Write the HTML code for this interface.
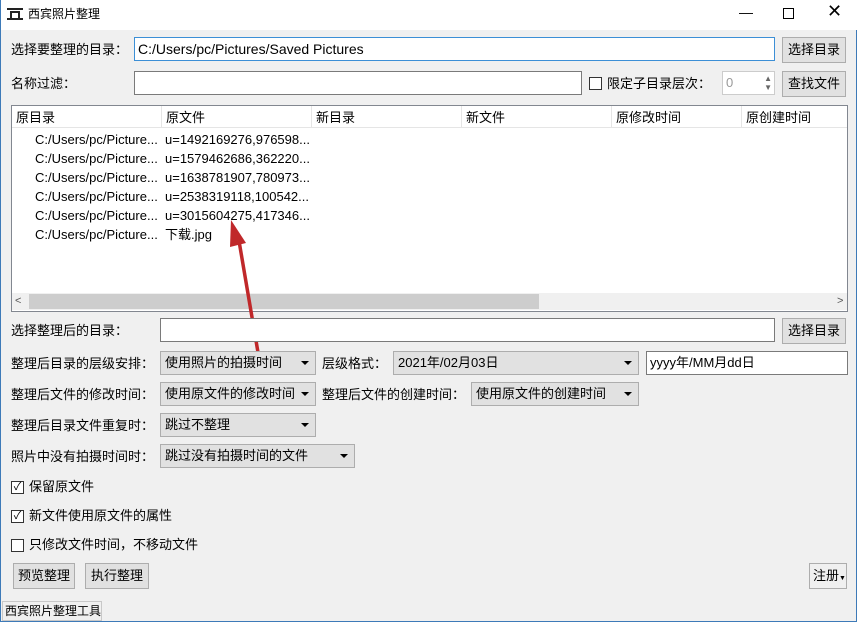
<!DOCTYPE html>
<html><head><meta charset="utf-8"><style>
*{box-sizing:border-box;margin:0;padding:0}
body{width:857px;height:622px;background:#f0f0f0;font-family:"Liberation Sans","Noto Sans CJK SC",sans-serif;font-size:13px;line-height:17px;color:#000;position:relative;overflow:hidden;border-left:1px solid #3d7ab8;border-right:1px solid #3d7ab8;border-bottom:1px solid #3d7ab8}
.a{position:absolute;white-space:nowrap}
.in{position:absolute;background:#fff;border:1px solid #7a7a7a;height:24px;line-height:22px;padding-left:3px}
.btn{position:absolute;background:#e1e1e1;border:1px solid #adadad;height:26px;line-height:24px;text-align:center}
.cb{position:absolute;background:#e1e1e1;border:1px solid #adadad;height:24px;line-height:22px;padding-left:4px}
.cb:after{content:"";position:absolute;right:6px;top:9px;border-left:4px solid transparent;border-right:4px solid transparent;border-top:4px solid #000}
.chk{position:absolute;width:13px;height:13px;border:1px solid #333;background:#fff;font-size:11px;line-height:11px;text-align:center}
</style></head><body>
<div class="a" style="left:0;top:0;width:857px;height:30px;background:#fff"></div>
<div class="a" style="left:6px;top:8px;width:16px;height:12px;border-top:2px solid #222;border-bottom:2px solid #222"><div style="position:absolute;left:3px;top:1px;width:10px;height:7px;border:2px solid #222;border-bottom:none"></div></div>
<div class="a" style="left:27px;top:6px;font-size:12px">西宾照片整理</div>
<div class="a" style="left:738px;top:4px;font-size:14px">&#x2014;</div>
<div class="a" style="left:782px;top:8px;width:11px;height:11px;border:1px solid #000"></div>
<div class="a" style="left:826px;top:3px;font-size:18px">&#x2715;</div>

<div class="a" style="left:10px;top:41px">选择要整理的目录：</div>
<div class="in" style="left:133px;top:37px;width:641px;border-color:#3c8fd6;font-size:14px">C:/Users/pc/Pictures/Saved Pictures</div>
<div class="btn" style="left:781px;top:37px;width:64px">选择目录</div>

<div class="a" style="left:10px;top:75px">名称过滤：</div>
<div class="in" style="left:133px;top:71px;width:448px"></div>
<div class="chk" style="left:588px;top:77px"></div>
<div class="a" style="left:606px;top:75px">限定子目录层次：</div>
<div class="in" style="left:721px;top:71px;width:53px;border-color:#ccc;color:#999">0<span style="position:absolute;right:2px;top:2px;font-size:8px;line-height:9px;color:#666">▲<br>▼</span></div>
<div class="btn" style="left:781px;top:71px;width:64px">查找文件</div>

<div class="a" style="left:10px;top:105px;width:837px;height:207px;background:#fff;border:1px solid #828790"></div>
<div class="a" style="left:11px;top:106px;width:835px;height:22px;border-bottom:1px solid #e5e5e5"></div>
<div class="a" style="left:15px;top:109px">原目录</div>
<div class="a" style="left:160px;top:106px;width:1px;height:22px;background:#e5e5e5"></div>
<div class="a" style="left:165px;top:109px">原文件</div>
<div class="a" style="left:310px;top:106px;width:1px;height:22px;background:#e5e5e5"></div>
<div class="a" style="left:315px;top:109px">新目录</div>
<div class="a" style="left:460px;top:106px;width:1px;height:22px;background:#e5e5e5"></div>
<div class="a" style="left:465px;top:109px">新文件</div>
<div class="a" style="left:610px;top:106px;width:1px;height:22px;background:#e5e5e5"></div>
<div class="a" style="left:615px;top:109px">原修改时间</div>
<div class="a" style="left:740px;top:106px;width:1px;height:22px;background:#e5e5e5"></div>
<div class="a" style="left:745px;top:109px">原创建时间</div>
<div class="a" style="left:34px;top:130px;line-height:19px">C:/Users/pc/Picture...<br>C:/Users/pc/Picture...<br>C:/Users/pc/Picture...<br>C:/Users/pc/Picture...<br>C:/Users/pc/Picture...<br>C:/Users/pc/Picture...</div>
<div class="a" style="left:164px;top:130px;line-height:19px">u=1492169276,976598...<br>u=1579462686,362220...<br>u=1638781907,780973...<br>u=2538319118,100542...<br>u=3015604275,417346...<br>下载.jpg</div>
<div class="a" style="left:11px;top:293px;width:835px;height:17px;background:#f0f0f0"></div>
<div class="a" style="left:28px;top:294px;width:510px;height:15px;background:#cdcdcd"></div>
<div class="a" style="left:14px;top:293px;font-size:11px;color:#555">&lt;</div>
<div class="a" style="left:836px;top:293px;font-size:11px;color:#555">&gt;</div>

<svg class="a" style="left:225px;top:215px" width="45" height="160"><line x1="35" y1="155" x2="12" y2="20" stroke="#c0282a" stroke-width="3.5"/><polygon points="5,5 4,32 20,28" fill="#c0282a"/></svg>

<div class="a" style="left:10px;top:322px">选择整理后的目录：</div>
<div class="in" style="left:159px;top:318px;width:615px"></div>
<div class="btn" style="left:781px;top:318px;width:64px">选择目录</div>

<div class="a" style="left:10px;top:355px">整理后目录的层级安排：</div>
<div class="cb" style="left:159px;top:351px;width:156px">使用照片的拍摄时间</div>
<div class="a" style="left:321px;top:355px">层级格式：</div>
<div class="cb" style="left:392px;top:351px;width:246px">2021年/02月03日</div>
<div class="in" style="left:645px;top:351px;width:202px">yyyy年/MM月dd日</div>

<div class="a" style="left:10px;top:386px">整理后文件的修改时间：</div>
<div class="cb" style="left:159px;top:382px;width:156px">使用原文件的修改时间</div>
<div class="a" style="left:321px;top:386px">整理后文件的创建时间：</div>
<div class="cb" style="left:470px;top:382px;width:168px">使用原文件的创建时间</div>

<div class="a" style="left:10px;top:417px">整理后目录文件重复时：</div>
<div class="cb" style="left:159px;top:413px;width:156px">跳过不整理</div>
<div class="a" style="left:10px;top:448px">照片中没有拍摄时间时：</div>
<div class="cb" style="left:159px;top:444px;width:195px">跳过没有拍摄时间的文件</div>

<div class="chk" style="left:10px;top:481px">✓</div><div class="a" style="left:28px;top:478px">保留原文件</div>
<div class="chk" style="left:10px;top:510px">✓</div><div class="a" style="left:28px;top:507px">新文件使用原文件的属性</div>
<div class="chk" style="left:10px;top:539px"></div><div class="a" style="left:28px;top:536px">只修改文件时间，不移动文件</div>

<div class="btn" style="left:12px;top:563px;width:62px">预览整理</div>
<div class="btn" style="left:84px;top:563px;width:64px">执行整理</div>
<div class="a" style="left:808px;top:563px;width:38px;height:26px;border:1px solid #adadad;line-height:24px;padding-left:3px">注册<span style="font-size:7px">▼</span></div>
<div class="a" style="left:1px;top:601px;width:100px;height:20px;border:1px solid #c8c8c8;font-size:12px;line-height:18px;padding-left:2px">西宾照片整理工具</div>
</body></html>
